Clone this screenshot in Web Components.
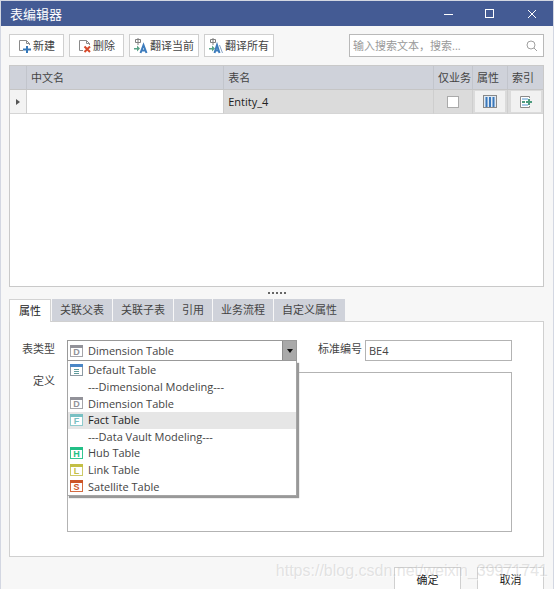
<!DOCTYPE html>
<html lang="zh-CN">
<head>
<meta charset="utf-8">
<meta name="viewport" content="width=device-width, initial-scale=1">
<title>表编辑器</title>
<style>
    body {
        margin: 0;
        height: 100vh;
        overflow: hidden;
        position: relative;
        background: #f7f7f7;
        color: #444;
        font: 11px/16px "Open Sans", "Noto Sans CJK SC", sans-serif;
    }

    .watermark {
        position: absolute;
        right: 6px;
        bottom: 8px;
        font: 16px/20px "Liberation Sans", sans-serif;
        color: rgba(190, 190, 190, 0.4);
        text-shadow: 1px 1px 0 rgba(255, 255, 255, 0.6);
        pointer-events: none;
    }
</style>
</head>
<body>
<editor-window heading="表编辑器">
    <editor-toolbar slot="toolbar">
        <tool-button icon="add">新建</tool-button>
        <tool-button icon="remove">删除</tool-button>
        <tool-button icon="translate" wide>翻译当前</tool-button>
        <tool-button icon="translate-all" wide>翻译所有</tool-button>
        <search-box slot="end" placeholder="输入搜索文本，搜索..."></search-box>
    </editor-toolbar>
    <entity-grid></entity-grid>
    <split-handle></split-handle>
    <tab-strip tabs="属性,关联父表,关联子表,引用,业务流程,自定义属性">
        <property-form>
            <type-select slot="type" label="表类型"></type-select>
            <text-field slot="code" label="标准编号" value="BE4"></text-field>
            <text-field slot="definition" label="定义" multiline></text-field>
        </property-form>
    </tab-strip>
    <dialog-button slot="actions">确定</dialog-button>
    <dialog-button slot="actions">取消</dialog-button>
</editor-window>
<div class="watermark">https://blog.csdn.net/weixin_39971741</div>

<script>
const baseStyle = `
    * {
        margin: 0;
        padding: 0;
        box-sizing: border-box;
    }

    button, input, textarea, select {
        font: inherit;
        color: inherit;
        border-radius: 0;
        outline: none;
    }

    svg {
        display: block;
        flex: none;
    }
`;

const page = `<path d="M5 11.500H1.500V1.500H8.500L11.500 4.500V6M8.500 1.500V4.500H11.500" fill="none" stroke="#8a8a8a"/>`;

const translateBase = `
    <path d="M1.500 2.500H6.500V5.500H1.500ZM4 1V8" fill="none" stroke="#808080"/>
    <path d="M0 11H3V8.500L6 11.500L3 14.500V12.500H0Z" fill="#5aa488"/>`;

const icons = {
    "add": `<svg width="13" height="14" viewBox="0 0 13 14">${page}
        <path d="M9 7V14M5 10.500H13" stroke="#3477b8" stroke-width="2"/></svg>`,
    "remove": `<svg width="13" height="14" viewBox="0 0 13 14">${page}
        <path d="M6.500 7.500L12 13M12 7.500L6.500 13" stroke="#d64a2b" stroke-width="2"/></svg>`,
    "translate": `<svg width="14" height="18" viewBox="0 0 14 18">${translateBase}
        <path d="M6.500 16L9.500 8L12.500 16M7.500 13.500H11.500" fill="none" stroke="#3d7cbd" stroke-width="2"/></svg>`,
    "translate-all": `<svg width="14" height="18" viewBox="0 0 14 18">${translateBase}
        <path d="M5.500 16L8 8L10.500 16M6.500 13.500H9.500" fill="none" stroke="#3d7cbd" stroke-width="2"/>
        <path d="M10.500 8L13.500 16" fill="none" stroke="#8aa4c4"/></svg>`,
    "search": `<svg width="12" height="12" viewBox="0 0 12 12">
        <circle cx="5" cy="5" r="4" fill="none" stroke="#a0a0a0"/>
        <path d="M8 8L11 11" stroke="#a0a0a0"/></svg>`,
    "columns": `<svg width="14" height="14" viewBox="0 0 14 14">
        <rect x="0.500" y="0.500" width="13" height="12" fill="#dfe9f3" stroke="#888"/>
        <path d="M3.500 2V12M7 2V12M10.500 2V12" stroke="#3a78bb" stroke-width="2"/></svg>`,
    "index": `<svg width="14" height="14" viewBox="0 0 14 14">
        <path d="M10.500 3V1.500H1.500V12.500H10.500V11" fill="#fff" stroke="#8a8a8a"/>
        <path d="M3 4H9M3 10H9" stroke="#a9cbe8" stroke-width="2"/>
        <path d="M3 7H6M7 7H13M10 4V10" stroke="#4d9b7e" stroke-width="2"/></svg>`
};

const tableTypes = [
    {name: "Default Table", letter: "", bar: "#4a86c6", frame: "#8d9aa3"},
    {name: "---Dimensional Modeling---"},
    {name: "Dimension Table", letter: "D", bar: "#929299", frame: "#a5a5aa"},
    {name: "Fact Table", letter: "F", bar: "#78c0c3", frame: "#8fcbcd"},
    {name: "---Data Vault Modeling---"},
    {name: "Hub Table", letter: "H", bar: "#22bf86", frame: "#35c792"},
    {name: "Link Table", letter: "L", bar: "#c3bf45", frame: "#cdca68"},
    {name: "Satellite Table", letter: "S", bar: "#cc5526", frame: "#d56b41"}
];

function typeIcon(type) {
    if (!type.bar) {
        return "";
    }
    const mark = type.letter
        ? `<text x="6.500" y="10" text-anchor="middle" font-family="Liberation Sans, sans-serif" font-size="9" font-weight="bold" fill="${type.bar}">${type.letter}</text>`
        : `<path d="M4 5.500H9M4 7.500H9M4 9.500H9" stroke="#5f9c9c"/>`;
    return `<svg width="13" height="13" viewBox="0 0 13 13" aria-hidden="true">
        <rect x="0.500" y="0.500" width="12" height="11" fill="#fff" stroke="${type.frame}"/>
        <path d="M0 1.500H13" stroke="${type.bar}" stroke-width="3"/>${mark}</svg>`;
}

class EditorWindow extends HTMLElement {
    constructor() {
        super();
        this.attachShadow({mode: "open"});
    }

    connectedCallback() {
        this.shadowRoot.innerHTML = `
        <style>
        ${baseStyle}
        :host {
            display: block;
            border: 1px solid #d3d7e2;
            border-bottom: none;
        }

        header {
            display: flex;
            align-items: center;
            height: 25px;
            padding-left: 9px;
            background: #445b94;
            color: #fff;
        }

        h1 {
            flex: 1;
            font-size: 13px;
            font-weight: normal;
        }

        header button {
            display: flex;
            justify-content: center;
            width: 42px;
            border: none;
            background: none;
        }

        main {
            padding: 8px 9px 0 8px;
        }

        footer {
            display: flex;
            justify-content: flex-end;
            gap: 16px;
            padding: 10px 9px;
        }
        </style>
        <header>
            <h1>${this.getAttribute("heading")}</h1>
            <button aria-label="最小化"><svg width="10" height="10"><path d="M1 5.500H10" stroke="#fff"/></svg></button>
            <button aria-label="最大化"><svg width="10" height="10"><rect x="0.500" y="0.500" width="8" height="8" fill="none" stroke="#fff"/></svg></button>
            <button aria-label="关闭"><svg width="10" height="10"><path d="M1 1L9 9M9 1L1 9" stroke="#fff"/></svg></button>
        </header>
        <main>
            <slot name="toolbar"></slot>
            <slot></slot>
        </main>
        <footer><slot name="actions"></slot></footer>`;
    }
}
customElements.define("editor-window", EditorWindow);

class EditorToolbar extends HTMLElement {
    constructor() {
        super();
        this.attachShadow({mode: "open"}).innerHTML = `
        <style>
        :host {
            display: flex;
            align-items: flex-start;
            gap: 5px;
            margin-bottom: 8px;
        }

        .space {
            flex: 1;
        }
        </style>
        <slot></slot>
        <div class="space"></div>
        <slot name="end"></slot>`;
    }
}
customElements.define("editor-toolbar", EditorToolbar);

class ToolButton extends HTMLElement {
    constructor() {
        super();
        this.attachShadow({mode: "open"});
    }

    connectedCallback() {
        this.shadowRoot.innerHTML = `
        <style>
        ${baseStyle}
        :host {
            display: block;
            width: 55px;
        }

        :host([wide]) {
            width: 70px;
        }

        button {
            display: flex;
            align-items: center;
            justify-content: center;
            gap: 2px;
            width: 100%;
            height: 23px;
            border: 1px solid #cfcfcf;
            background: #fff;
            white-space: nowrap;
        }
        </style>
        <button>${icons[this.getAttribute("icon")]}<span><slot></slot></span></button>`;
    }
}
customElements.define("tool-button", ToolButton);

class SearchBox extends HTMLElement {
    constructor() {
        super();
        this.attachShadow({mode: "open"});
    }

    connectedCallback() {
        const hint = this.getAttribute("placeholder");
        this.shadowRoot.innerHTML = `
        <style>
        ${baseStyle}
        :host {
            display: flex;
            align-items: center;
            width: 195px;
            height: 23px;
            box-sizing: border-box;
            padding: 0 5px 0 3px;
            border: 1px solid #b9b9b9;
            background: #fff;
        }

        input {
            flex: 1;
            min-width: 0;
            border: none;
            background: none;
        }

        input::placeholder {
            color: #999;
        }
        </style>
        <input type="search" aria-label="搜索" placeholder="${hint}">
        ${icons.search}`;
    }
}
customElements.define("search-box", SearchBox);

class EntityGrid extends HTMLElement {
    constructor() {
        super();
        this.attachShadow({mode: "open"});
    }

    connectedCallback() {
        this.shadowRoot.innerHTML = `
        <style>
        ${baseStyle}
        :host {
            display: block;
            min-height: 222px;
            box-sizing: border-box;
            border: 1px solid #c9c9c9;
            background: #fff;
        }

        table {
            width: 100%;
            table-layout: fixed;
            border-collapse: separate;
            border-spacing: 0;
        }

        th {
            height: 24px;
            padding-left: 4px;
            border-right: 1px solid #c2c5cc;
            border-bottom: 1px solid #c5c5c5;
            background: #cfd2da;
            font-weight: normal;
            text-align: left;
            white-space: nowrap;
        }

        td {
            height: 24px;
            border-right: 1px solid #cecece;
            border-bottom: 1px solid #d5d5d5;
            background: #dbdbdb;
            color: #222;
        }

        th:last-child, td:last-child {
            border-right: none;
        }

        .marker {
            width: 17px;
        }

        td.marker {
            background: #f3f3f3;
        }

        .marker svg {
            margin: auto;
        }

        th.local {
            width: 37%;
        }

        .entity {
            padding-left: 4px;
        }

        .flag {
            width: 39px;
        }

        .action {
            width: 35px;
        }

        td input[type=text] {
            display: block;
            width: 100%;
            height: 23px;
            padding: 0 4px;
            border: none;
            background: #fff;
        }

        td input[type=checkbox] {
            appearance: none;
            display: block;
            width: 12px;
            height: 12px;
            margin: auto;
            border: 1px solid #aaa;
            background: #fff;
        }

        td button {
            display: flex;
            align-items: center;
            justify-content: center;
            width: 30px;
            height: 21px;
            margin: auto;
            border: none;
            background: #f1f1f1;
        }
        </style>
        <table>
            <thead>
                <tr>
                    <th class="marker"></th>
                    <th class="local">中文名</th>
                    <th>表名</th>
                    <th class="flag">仅业务</th>
                    <th class="action">属性</th>
                    <th class="action">索引</th>
                </tr>
            </thead>
            <tbody>
                <tr>
                    <td class="marker"><svg width="4" height="6"><path d="M0 0L4 3L0 6Z" fill="#555"/></svg></td>
                    <td><input type="text" aria-label="中文名"></td>
                    <td class="entity">Entity_4</td>
                    <td class="flag"><input type="checkbox" aria-label="仅业务"></td>
                    <td><button aria-label="属性">${icons.columns}</button></td>
                    <td><button aria-label="索引">${icons.index}</button></td>
                </tr>
            </tbody>
        </table>`;
    }
}
customElements.define("entity-grid", EntityGrid);

class SplitHandle extends HTMLElement {
    constructor() {
        super();
        this.attachShadow({mode: "open"}).innerHTML = `
        <style>
        :host {
            display: flex;
            align-items: center;
            justify-content: center;
            gap: 2px;
            height: 12px;
        }

        i {
            width: 2px;
            height: 2px;
            background: #666;
        }
        </style>
        <i></i><i></i><i></i><i></i><i></i>`;
    }
}
customElements.define("split-handle", SplitHandle);

class TabStrip extends HTMLElement {
    constructor() {
        super();
        this.attachShadow({mode: "open"});
    }

    connectedCallback() {
        const tabs = this.getAttribute("tabs").split(",");
        this.shadowRoot.innerHTML = `
        <style>
        ${baseStyle}
        :host {
            display: block;
        }

        nav {
            display: flex;
            gap: 1px;
        }

        button {
            height: 22px;
            padding: 0 8px;
            border: none;
            background: #cfd2da;
            white-space: nowrap;
        }

        button[aria-selected=true] {
            height: 23px;
            margin-bottom: -1px;
            padding: 0 9px;
            border: 1px solid #d3d3d3;
            border-bottom: none;
            background: #fff;
            color: #222;
        }

        section {
            padding: 18px 32px 24px 1px;
            border: 1px solid #d0d0d0;
            background: #fff;
        }
        </style>
        <nav role="tablist">
            ${tabs.map((tab, i) => `<button role="tab" aria-selected="${i === 0}">${tab}</button>`).join("")}
        </nav>
        <section role="tabpanel"><slot></slot></section>`;
    }
}
customElements.define("tab-strip", TabStrip);

class PropertyForm extends HTMLElement {
    constructor() {
        super();
        this.attachShadow({mode: "open"}).innerHTML = `
        <style>
        :host {
            display: grid;
            row-gap: 11px;
        }

        .row {
            display: grid;
            grid-template-columns: 286px 1fr;
            column-gap: 21px;
        }
        </style>
        <div class="row">
            <slot name="type"></slot>
            <slot name="code"></slot>
        </div>
        <slot name="definition"></slot>`;
    }
}
customElements.define("property-form", PropertyForm);

const fieldStyle = `
    :host {
        display: flex;
        align-items: flex-start;
        gap: 12px;
    }

    label {
        flex: none;
        width: 44px;
        padding-top: 1px;
        text-align: right;
        white-space: nowrap;
    }
`;

class TextField extends HTMLElement {
    constructor() {
        super();
        this.attachShadow({mode: "open"});
    }

    connectedCallback() {
        const value = this.getAttribute("value") || "";
        const control = this.hasAttribute("multiline")
            ? `<textarea id="field">${value}</textarea>`
            : `<input id="field" type="text" value="${value}">`;
        this.shadowRoot.innerHTML = `
        <style>
        ${baseStyle}
        ${fieldStyle}
        :host(:not([multiline])) {
            gap: 3px;
        }

        input, textarea {
            flex: 1;
            min-width: 0;
            height: 21px;
            padding: 0 3px;
            border: 1px solid #b3b3b3;
            background: #fff;
        }

        textarea {
            height: 160px;
            resize: none;
        }
        </style>
        <label for="field">${this.getAttribute("label")}</label>
        ${control}`;
    }
}
customElements.define("text-field", TextField);

class TypeSelect extends HTMLElement {
    constructor() {
        super();
        this.attachShadow({mode: "open"});
    }

    connectedCallback() {
        const chosen = tableTypes[2];
        this.shadowRoot.innerHTML = `
        <style>
        ${baseStyle}
        ${fieldStyle}
        .box {
            position: relative;
            flex: 1;
        }

        select {
            appearance: none;
            display: block;
            width: 100%;
            height: 21px;
            padding: 0 16px 0 20px;
            border: 1px solid #999;
            background: #fff;
        }

        .box > svg {
            position: absolute;
            top: 5px;
            left: 3px;
        }

        .arrow {
            position: absolute;
            top: 1px;
            right: 1px;
            display: flex;
            align-items: center;
            justify-content: center;
            width: 14px;
            height: 19px;
            box-sizing: border-box;
            border-left: 1px solid #8c8c8c;
            background: #a9a9a9;
            pointer-events: none;
        }

        ul {
            position: absolute;
            top: 21px;
            left: 0;
            right: 0;
            z-index: 1;
            display: grid;
            grid-auto-rows: 1fr;
            height: 135px;
            padding-top: 1px;
            border: 1px solid #a5a5a5;
            border-top: none;
            background: #fff;
            box-shadow: 2px 2px 1px #999;
            list-style: none;
        }

        li {
            display: grid;
            grid-template-columns: 13px 1fr;
            column-gap: 5px;
            align-items: center;
            padding-left: 2px;
            white-space: nowrap;
        }

        li span {
            grid-column: 2;
        }

        li.active {
            background: #e6e6e6;
            color: #222;
        }
        </style>
        <label for="type">${this.getAttribute("label")}</label>
        <div class="box">
            <select id="type">
                ${tableTypes.map(t => `<option${t === chosen ? " selected" : ""}${t.bar ? "" : " disabled"}>${t.name}</option>`).join("")}
            </select>
            ${typeIcon(chosen)}
            <div class="arrow"><svg width="6" height="4"><path d="M0 0H6L3 4Z" fill="#111"/></svg></div>
            <ul role="listbox" aria-label="表类型">
                ${tableTypes.map(t => `<li role="option" class="${t.name === "Fact Table" ? "active" : ""}">${typeIcon(t)}<span>${t.name}</span></li>`).join("")}
            </ul>
        </div>`;
    }
}
customElements.define("type-select", TypeSelect);

class DialogButton extends HTMLElement {
    constructor() {
        super();
        this.attachShadow({mode: "open"}).innerHTML = `
        <style>
        ${baseStyle}
        :host {
            display: block;
            width: 67px;
        }

        button {
            width: 100%;
            height: 26px;
            border: 1px solid #d0d0d0;
            background: #fff;
            color: #222;
        }
        </style>
        <button><slot></slot></button>`;
    }
}
customElements.define("dialog-button", DialogButton);
</script>
</body>
</html>
